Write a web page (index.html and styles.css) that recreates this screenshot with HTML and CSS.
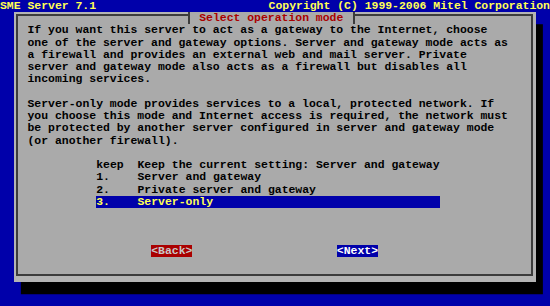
FILE: index.html
```html
<!DOCTYPE html>
<html lang="en">

<head>
    <meta charset="UTF-8">
    <title>SME Server 7.1 - Select operation mode</title>
    <link rel="stylesheet" href="styles.css">
</head>

<body>
    <div class="screen">
        <div class="topbar">
            <span>SME Server 7.1</span>
            <span>Copyright (C) 1999-2006 Mitel Corporation</span>
        </div>

        <div class="dialog">
            <div class="frame"></div>

            <div class="title-row">
                <span class="title">Select operation mode</span>
            </div>

            <div class="body">
<pre class="text">If you want this server to act as a gateway to the Internet, choose
one of the server and gateway options. Server and gateway mode acts as
a firewall and provides an external web and mail server. Private
server and gateway mode also acts as a firewall but disables all
incoming services.

Server-only mode provides services to a local, protected network. If
you choose this mode and Internet access is required, the network must
be protected by another server configured in server and gateway mode
(or another firewall).
</pre>

                <div class="menu">
                    <div class="item"><span class="tag">keep</span><span>Keep the current setting: Server and gateway</span></div>
                    <div class="item"><span class="tag">1.</span><span>Server and gateway</span></div>
                    <div class="item"><span class="tag">2.</span><span>Private server and gateway</span></div>
                    <div class="item selected"><span class="tag">3.</span><span>Server-only</span></div>
                </div>

                <div class="buttons">
                    <span class="button back">&lt;Back&gt;</span>
                    <span class="button next">&lt;Next&gt;</span>
                </div>
            </div>
        </div>
    </div>
</body>

</html>
```

FILE: styles.css
```css
/* 80x25 text console scaled to 550x306: one cell is 6.875 x 12.24 px */
body {
    margin: 0;
    background: #0000aa;
}

.screen {
    width: 550px;
    height: 306px;
    overflow: hidden;
    background: #0000aa;
    font-family: 'Liberation Mono', 'DejaVu Sans Mono', monospace;
    font-size: 11.4583px;
    font-weight: bold;
    line-height: 12.24px;
    color: #000;
}

.topbar {
    display: flex;
    justify-content: space-between;
    height: 12.24px;
    color: #ffff55;
    white-space: pre;
}

.dialog {
    position: relative;
    margin-left: 13.75px;
    width: 522.5px;
    height: 269.28px;
    background: #b4b4b4;
    box-shadow: 6.875px 12.24px 0 #000;
}

/* the box-drawing border inside the dialog */
.frame {
    position: absolute;
    left: 2.5px;
    top: 2px;
    right: 3px;
    bottom: 6px;
    border: 2px solid #3c3c3c;
    background: #aaaaaa;
}

.title-row {
    position: relative;
    height: 12.24px;
}

.title {
    display: inline-block;
    height: 12.24px;
    margin-left: 174.25px;
    padding: 0 9.2px;
    border-left: 2px solid #3c3c3c;
    border-right: 2px solid #3c3c3c;
    background: #aaaaaa;
    color: #aa0000;
    white-space: pre;
}

.body {
    position: relative;
    padding-left: 13.75px;
}

.text {
    margin: 0;
    font: inherit;
    line-height: 12.24px;
    white-space: pre;
}

.menu {
    margin-top: 12.24px;
    margin-left: 68.75px;
    width: 343.75px;
}

.item {
    display: flex;
    height: 12.24px;
    white-space: pre;
}

.item .tag {
    width: 41.25px;
}

.item.selected {
    background: #0000aa;
    color: #ffff55;
}

.buttons {
    display: flex;
    gap: 144.375px;
    margin-top: 36.72px;
    margin-left: 123.75px;
    height: 12.24px;
}

.button {
    white-space: pre;
}

.back {
    background: #aa0000;
    color: #c8c8c8;
}

.next {
    background: #0000aa;
    color: #ffffff;
}
```
